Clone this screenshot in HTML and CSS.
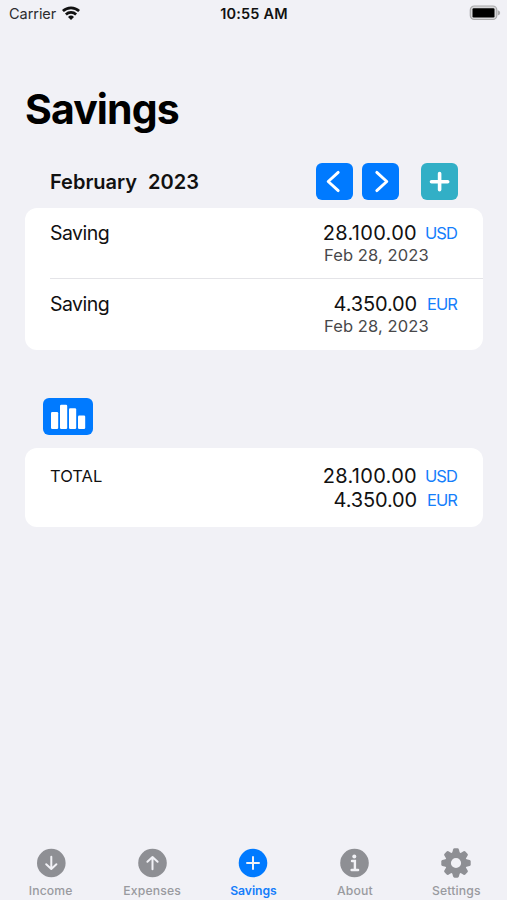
FILE: index.html
```html
<!DOCTYPE html>
<html lang="en">
<head>
<meta charset="utf-8">
<title>Savings</title>
<link rel="stylesheet" href="styles.css">
</head>
<body>
<div class="app">
  <header class="status">
    <div class="carrier"><span>Carrier</span>
      <svg width="18" height="14" viewBox="0 0 18 14"><g fill="none" stroke="#111" stroke-width="2.7"><path d="M.9 5a11.9 11.9 0 0 1 16.2 0"/><path d="M3.9 8.5a7.4 7.4 0 0 1 10.2 0"/></g><path fill="#111" d="M6 10.9a4.4 4.4 0 0 1 6 0L9 13.9z"/></svg>
    </div>
    <span class="time">10:55 AM</span>
    <svg class="battery" width="32" height="16" viewBox="0 0 32 16"><rect x="1.3" y="1" width="26.5" height="13.5" rx="4" fill="#d6d6d9" stroke="#a9a9ab" stroke-width="1.2"/><rect x="3.5" y="3.2" width="22" height="9.2" rx="1.2"/><path d="M28.8 5.3q2.4.8 2.4 2.6t-2.4 2.6z" fill="#a9a9ab"/></svg>
  </header>
  <h1 class="title">Savings</h1>
  <main>
    <div class="month">
      <h2 class="month-name"><span>February</span><span>2023</span></h2>
      <button class="btn" aria-label="Previous"><svg width="37" height="37" viewBox="0 0 37 37"><path d="M22.2 9.4 12.2 18.5l10 9.1"/></svg></button>
      <button class="btn" aria-label="Next"><svg width="37" height="37" viewBox="0 0 37 37"><path d="m14.8 9.4 10 9.1-10 9.1"/></svg></button>
      <button class="btn btn-add" aria-label="Add"><svg width="37" height="37" viewBox="0 0 37 37"><path class="plus" d="M18.6 10.6v16.2M10.5 18.7h16.2"/></svg></button>
    </div>
    <section class="card">
      <div class="row"><span class="name">Saving</span><div class="value"><div class="money"><span class="amount">28.100.00</span><span class="cur">USD</span></div><div class="date">Feb 28, 2023</div></div></div>
      <div class="row"><span class="name">Saving</span><div class="value"><div class="money"><span class="amount short">4.350.00</span><span class="cur">EUR</span></div><div class="date">Feb 28, 2023</div></div></div>
    </section>
    <button class="chart" aria-label="Chart"><svg width="50" height="37" viewBox="0 0 50 37"><g fill="#fff"><rect x="8" y="14" width="7.2" height="17" rx="1.2"/><rect x="17" y="6.7" width="7.2" height="24.3" rx="1.2"/><rect x="26" y="10.3" width="7.2" height="20.7" rx="1.2"/><rect x="35" y="17.5" width="7.2" height="13.5" rx="1.2"/></g></svg></button>
    <section class="card total">
      <span class="total-label">TOTAL</span>
      <div class="value"><div class="money"><span class="amount">28.100.00</span><span class="cur">USD</span></div><div class="money"><span class="amount short">4.350.00</span><span class="cur">EUR</span></div></div>
    </section>
  </main>
  <nav class="tabs">
    <a class="tab"><svg width="30" height="30" viewBox="0 0 30 30"><circle cx="15.3" cy="15" r="14.3"/><path class="line" d="M15.3 8.7v12M10.2 16.3l5.1 4.7 5.1-4.7"/></svg><span>Income</span></a>
    <a class="tab"><svg width="30" height="30" viewBox="0 0 30 30"><circle cx="15.5" cy="15" r="14.3"/><path class="line" d="M15.5 21.3v-12M10.4 13.7 15.5 9l5.1 4.7"/></svg><span>Expenses</span></a>
    <a class="tab active"><svg width="30" height="30" viewBox="0 0 30 30"><circle cx="15" cy="15" r="14.3"/><path class="line" d="M15 9v12M9 15h12"/></svg><span>Savings</span></a>
    <a class="tab"><svg width="30" height="30" viewBox="0 0 30 30"><circle cx="14.5" cy="15" r="14.3"/><circle cx="14.3" cy="8.4" r="2" fill="#f1f1f6"/><path class="line info" d="M12 13h2.9v8.8M11.6 22h6.5"/></svg><span>About</span></a>
    <a class="tab"><svg width="30" height="30" viewBox="-15 -15 30 30"><path id="tooth" d="M-4-9.5-2.9-13.6q.3-1.1 1.4-1.1h3q1.1 0 1.4 1.1L4-9.5z"/><use href="#tooth" transform="rotate(45)"/><use href="#tooth" transform="rotate(90)"/><use href="#tooth" transform="rotate(135)"/><use href="#tooth" transform="rotate(180)"/><use href="#tooth" transform="rotate(225)"/><use href="#tooth" transform="rotate(270)"/><use href="#tooth" transform="rotate(315)"/><circle r="8" fill="none" stroke="#8e8f94" stroke-width="5.8"/></svg><span>Settings</span></a>
  </nav>
</div>
</body>
</html>
```
FILE: styles.css
```css
* { box-sizing: border-box; }
body { margin: 0; background: #f1f1f6; color: #111; font-family: Inter, "Liberation Sans", sans-serif; }
.app { width: 507px; height: 900px; display: flex; flex-direction: column; overflow: hidden; }
.status { height: 26px; padding: 0 6px 0 9px; display: grid; grid-template-columns: 1fr auto 1fr; align-items: center; font-size: 14.5px; }
.carrier { display: flex; align-items: center; gap: 6px; color: #2c2c2e; letter-spacing: -.05px; }
.time { font-weight: 600; letter-spacing: .2px; margin-right: 2px; }
.battery { justify-self: end; }
.title { margin: 58px 0 0 25px; height: 50px; line-height: 50px; font-size: 41px; font-weight: 700; letter-spacing: -.9px; color: #000; }
main { flex: 1; padding: 0 24px 0 25px; display: flex; flex-direction: column; }
.month { margin-top: 29px; height: 37px; padding: 0 25px; display: flex; align-items: center; }
.month-name { flex: 1; display: flex; gap: 11px; margin: 0; font-size: 20px; font-weight: 600; }
.btn, .chart { border: 0; padding: 0; background: #007aff; border-radius: 6px; }
.btn { width: 37px; height: 37px; }
.btn + .btn { margin-left: 9px; }
.btn.btn-add { margin-left: 22px; background: #32afc6; }
.btn svg, .chart svg { display: block; }
.btn path { fill: none; stroke: #fff; stroke-width: 2.9; stroke-linecap: round; stroke-linejoin: round; }
.btn .plus { stroke-width: 3.6; }
.card { margin-top: 8px; background: #fff; border-radius: 12px; }
.row { height: 71px; margin-left: 25px; padding: 13px 25px 0 0; display: flex; justify-content: space-between; }
.row:first-child { height: 70px; }
.row + .row { height: 72px; border-top: 1px solid #e4e4e8; }
.name { font-size: 19.5px; line-height: 24px; letter-spacing: -.55px; }
.value { width: 136px; }
.money { display: flex; justify-content: flex-end; align-items: center; height: 24px; }
.amount { font-size: 20px; letter-spacing: .3px; }
.amount.short { letter-spacing: -.15px; }
.cur { width: 41px; text-align: right; color: #157efb; font-size: 16.5px; letter-spacing: -.9px; padding-right: 1px; }
.date { font-size: 16.5px; line-height: 20px; letter-spacing: .1px; color: #48484a; padding-left: 2px; white-space: nowrap; }
.chart { width: 50px; height: 37px; margin: 48px 0 5px 18px; }
.total { height: 79px; padding: 16px 25px 0; display: flex; justify-content: space-between; }
.total-label { font-size: 16.5px; line-height: 24px; }
.tabs { height: 54px; display: grid; grid-template-columns: repeat(5, 1fr); }
.tab { display: flex; flex-direction: column; align-items: center; gap: 5px; padding-top: 2px; color: #999a9f; font-size: 12.2px; font-weight: 500; line-height: 16px; letter-spacing: .15px; }
.tab svg { fill: #8e8f94; flex: none; }
.tab .line { fill: none; stroke: #f1f1f6; stroke-width: 2; stroke-linecap: round; stroke-linejoin: round; }
.tab .info { stroke-width: 2.4; stroke-linejoin: miter; }
.tab.active { color: #157efb; font-weight: 600; letter-spacing: -.05px; }
.active svg { fill: #007aff; }
```
